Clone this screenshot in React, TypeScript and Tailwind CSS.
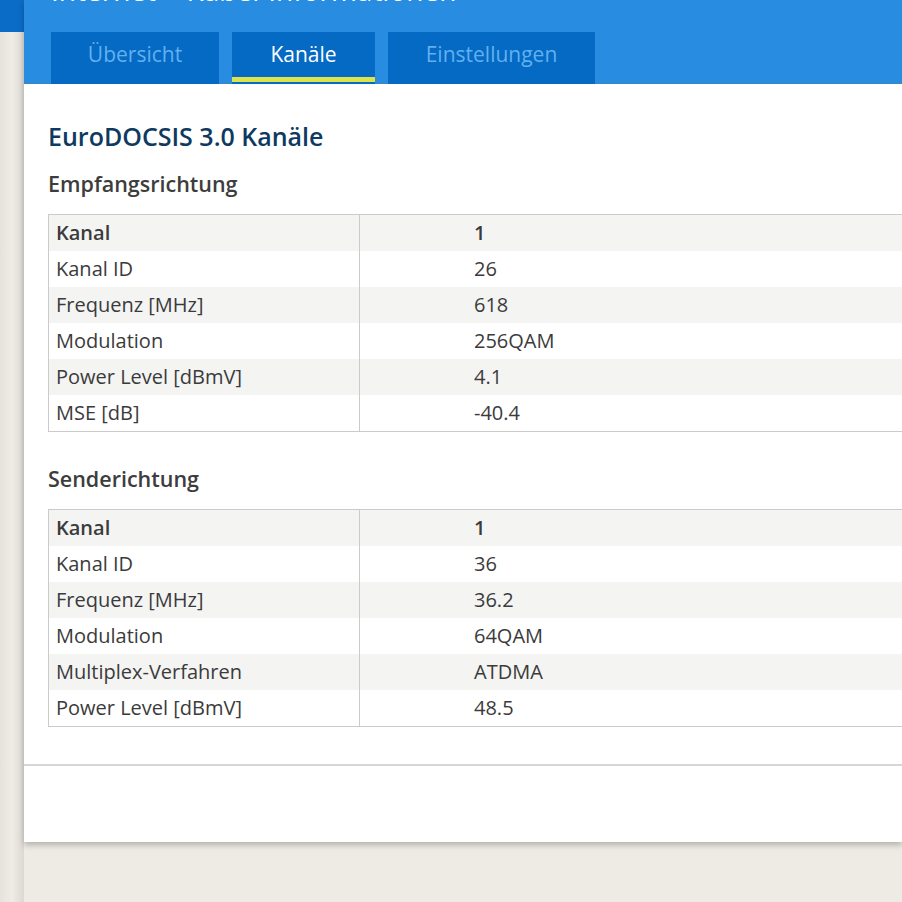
import React from 'react';

type Row = { label: string; value: string };

const downstream: Row[] = [
  { label: 'Kanal ID', value: '26' },
  { label: 'Frequenz [MHz]', value: '618' },
  { label: 'Modulation', value: '256QAM' },
  { label: 'Power Level [dBmV]', value: '4.1' },
  { label: 'MSE [dB]', value: '-40.4' },
];

const upstream: Row[] = [
  { label: 'Kanal ID', value: '36' },
  { label: 'Frequenz [MHz]', value: '36.2' },
  { label: 'Modulation', value: '64QAM' },
  { label: 'Multiplex-Verfahren', value: 'ATDMA' },
  { label: 'Power Level [dBmV]', value: '48.5' },
];

function ChannelTable({ rows }: { rows: Row[] }) {
  return (
    <div className="w-[900px] border border-[#cbcbcb] text-[20px] text-[#3b3b3b]">
      <div className="flex h-[36px] items-center bg-[#f4f4f3] font-semibold">
        <div className="flex h-full w-[311px] items-center border-r border-[#cbcbcb] pl-[7px]">Kanal</div>
        <div className="pl-[114px]">1</div>
      </div>
      {rows.map((row, i) => (
        <div
          key={row.label}
          className={`flex h-[36px] items-center ${i % 2 === 1 ? 'bg-[#f4f4f3]' : 'bg-white'}`}
        >
          <div className="flex h-full w-[311px] items-center border-r border-[#cbcbcb] pl-[7px]">{row.label}</div>
          <div className="pl-[114px]">{row.value}</div>
        </div>
      ))}
    </div>
  );
}

const tabs = [
  { label: 'Übersicht', width: 'w-[168px]', active: false },
  { label: 'Kanäle', width: 'w-[143px]', active: true },
  { label: 'Einstellungen', width: 'w-[207px]', active: false },
];

export default function App() {
  return (
    <div
      className="flex min-h-[902px] w-full overflow-hidden bg-[#eeebe5]"
      style={{ fontFamily: '"Open Sans", "Noto Sans", sans-serif' }}
    >
      <div className="w-[24px] shrink-0 bg-gradient-to-r from-[#e6e3dd] via-[#efece6] to-[#dcd9d3]">
        <div className="h-[32px] bg-[#0a6cc6]" />
      </div>

      <div className="flex h-[842px] flex-1 flex-col overflow-hidden bg-white shadow-[0_3px_6px_rgba(0,0,0,0.25)]">
        {/* header */}
        <div className="h-[84px] shrink-0 border-b border-[#3f86c0] bg-[#288ce0]">
          <div className="-mt-[26px] h-[32px] pl-[27px] text-[28px] leading-[32px] text-white">
            Internet &gt; Kabel-Informationen
          </div>
          <div className="mt-[26px] flex h-[52px] gap-[13px] pl-[27px]">
            {tabs.map((tab) => (
              <div
                key={tab.label}
                className={`relative flex h-full ${tab.width} items-center justify-center bg-[#046ac4] pb-[6px] text-[21px] ${
                  tab.active ? 'text-white' : 'text-[#62b0f0]'
                }`}
              >
                {tab.label}
                {tab.active && <div className="absolute bottom-[2px] left-0 h-[5px] w-full bg-[#dce34c]" />}
              </div>
            ))}
          </div>
        </div>

        {/* body */}
        <div className="px-[24px]">
          <h2 className="mt-[37px] text-[25px] font-semibold leading-[30px] text-[#0e3a62]">
            EuroDOCSIS 3.0 Kanäle
          </h2>
          <h3 className="mt-[19px] text-[21.5px] font-semibold leading-[28px] text-[#3d3d3d]">Empfangsrichtung</h3>
          <div className="mt-[16px]">
            <ChannelTable rows={downstream} />
          </div>
          <h3 className="mt-[33px] text-[21.5px] font-semibold leading-[28px] text-[#3d3d3d]">Senderichtung</h3>
          <div className="mt-[16px]">
            <ChannelTable rows={upstream} />
          </div>
        </div>
        <div className="mt-[37px] border-t-2 border-[#d6d6d6]" />
      </div>
    </div>
  );
}
